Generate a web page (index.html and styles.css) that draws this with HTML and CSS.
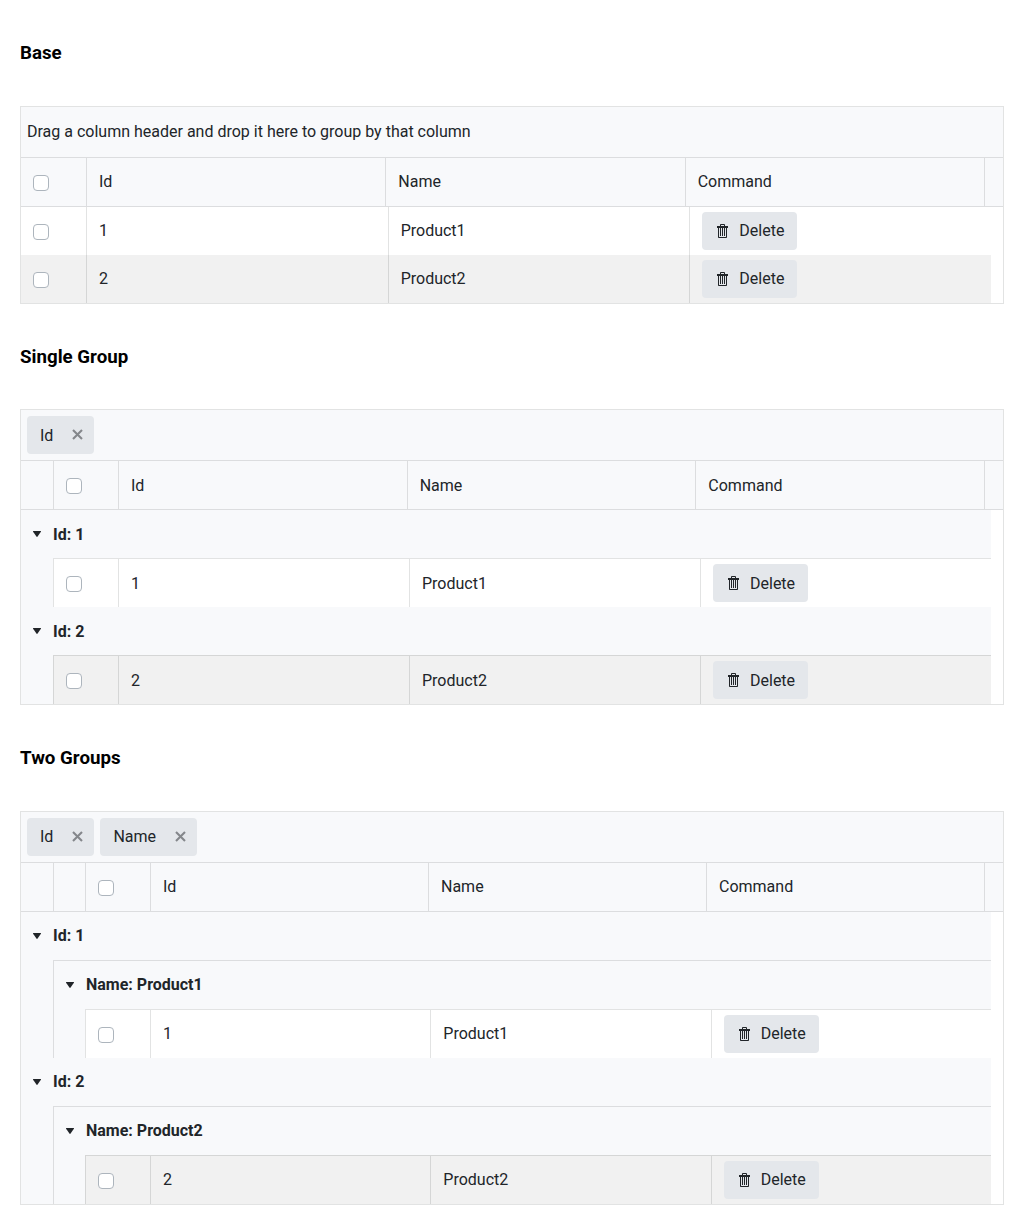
FILE: index.html
```html
<!DOCTYPE html>
<html lang="en">
<head>
<meta charset="utf-8">
<title>Grid grouping</title>
<link rel="stylesheet" href="styles.css">
</head>
<body>
<svg class="sprite" aria-hidden="true">
  <symbol id="trash" viewBox="0 0 11 14"><path fill-rule="evenodd" d="M3 2V.9Q3 0 3.9 0h3.2Q8 0 8 .9V2h3v2H0V2zM4 2h3V1H4zM1 4h1v9h7V4h1v9.2q0 .8-.8.8H1.8q-.8 0-.8-.8z"/><path d="M3 4h1v8H3zM5 4h1v8H5zM7 4h1v8H7z"/></symbol>
  <symbol id="close" viewBox="0 0 11 11"><path d="M1 1l9 9M10 1l-9 9" fill="none" stroke="currentColor" stroke-width="2.1"/></symbol>
  <symbol id="caret" viewBox="0 0 8 6"><path d="M.3 0h7.4q.5.2.2.7L4.6 5.6q-.6.6-1.2 0L.1.7Q-.2.2.3 0z"/></symbol>
</svg>

<h3 class="title">Base</h3>
<section class="grid">
  <div class="panel"><span class="hint">Drag a column header and drop it here to group by that column</span></div>
  <div class="head">
    <div class="cell check"><input type="checkbox" class="box"></div>
    <div class="cell">Id</div><div class="cell">Name</div><div class="cell">Command</div><div class="cell end"></div>
  </div>
  <div class="body">
    <div class="row">
      <div class="cell check"><input type="checkbox" class="box"></div><div class="cell">1</div><div class="cell">Product1</div>
      <div class="cell action"><button class="button"><svg class="trash"><use href="#trash"/></svg>Delete</button></div>
    </div>
    <div class="row alt">
      <div class="cell check"><input type="checkbox" class="box"></div><div class="cell">2</div><div class="cell">Product2</div>
      <div class="cell action"><button class="button"><svg class="trash"><use href="#trash"/></svg>Delete</button></div>
    </div>
  </div>
</section>

<h3 class="title">Single Group</h3>
<section class="grid depth-1">
  <div class="panel"><span class="chip">Id<svg class="close"><use href="#close"/></svg></span></div>
  <div class="head">
    <div class="cell indent"></div><div class="cell check"><input type="checkbox" class="box"></div>
    <div class="cell">Id</div><div class="cell">Name</div><div class="cell">Command</div><div class="cell end"></div>
  </div>
  <div class="body">
    <div class="group"><svg class="caret"><use href="#caret"/></svg>Id: 1</div>
    <div class="nest">
      <div class="row">
        <div class="cell check"><input type="checkbox" class="box"></div><div class="cell">1</div><div class="cell">Product1</div>
        <div class="cell action"><button class="button"><svg class="trash"><use href="#trash"/></svg>Delete</button></div>
      </div>
    </div>
    <div class="group"><svg class="caret"><use href="#caret"/></svg>Id: 2</div>
    <div class="nest">
      <div class="row alt">
        <div class="cell check"><input type="checkbox" class="box"></div><div class="cell">2</div><div class="cell">Product2</div>
        <div class="cell action"><button class="button"><svg class="trash"><use href="#trash"/></svg>Delete</button></div>
      </div>
    </div>
  </div>
</section>

<h3 class="title">Two Groups</h3>
<section class="grid depth-2">
  <div class="panel"><span class="chip">Id<svg class="close"><use href="#close"/></svg></span><span class="chip">Name<svg class="close"><use href="#close"/></svg></span></div>
  <div class="head">
    <div class="cell indent"></div><div class="cell indent"></div><div class="cell check"><input type="checkbox" class="box"></div>
    <div class="cell">Id</div><div class="cell">Name</div><div class="cell">Command</div><div class="cell end"></div>
  </div>
  <div class="body">
    <div class="group"><svg class="caret"><use href="#caret"/></svg>Id: 1</div>
    <div class="nest">
      <div class="group inner"><svg class="caret"><use href="#caret"/></svg>Name: Product1</div>
      <div class="nest plain">
        <div class="row">
          <div class="cell check"><input type="checkbox" class="box"></div><div class="cell">1</div><div class="cell">Product1</div>
          <div class="cell action"><button class="button"><svg class="trash"><use href="#trash"/></svg>Delete</button></div>
        </div>
      </div>
    </div>
    <div class="group"><svg class="caret"><use href="#caret"/></svg>Id: 2</div>
    <div class="nest">
      <div class="group inner"><svg class="caret"><use href="#caret"/></svg>Name: Product2</div>
      <div class="nest plain">
        <div class="row alt">
          <div class="cell check"><input type="checkbox" class="box"></div><div class="cell">2</div><div class="cell">Product2</div>
          <div class="cell action"><button class="button"><svg class="trash"><use href="#trash"/></svg>Delete</button></div>
        </div>
      </div>
    </div>
  </div>
</section>
</body>
</html>
```
FILE: styles.css
```css
:root {
  --line: rgba(33, 37, 41, .13);
  --surface: #f8f9fb;
  --text: #212529;
}
* { box-sizing: border-box; }
body {
  margin: 0;
  padding: 27px 20px 0;
  background: #fff;
  font: 16px/24px Roboto, sans-serif;
}
.sprite { display: none; }
.title {
  height: 52px;
  margin: 0 0 27px;
  padding-top: .08px;
  font-size: 18.72px;
  line-height: 52px;
  font-weight: 700;
  color: #000;
}
.grid {
  border: 1px solid var(--line);
  margin-bottom: 26.45px;
  color: var(--text);
}
.panel {
  display: flex;
  gap: 6px;
  height: 51px;
  padding: 6px;
  border-bottom: 1px solid var(--line);
  background: var(--surface);
}
.hint { padding-top: 7px; }
.chip {
  display: flex;
  align-items: center;
  height: 38px;
  padding: .16px 12px 0 13px;
  border-radius: 4px;
  background: #e4e7eb;
}
.close { width: 11px; height: 11px; margin: 0 -1px 1.2px 19px; color: #84878b; }
.head {
  display: grid;
  grid-template-columns: 65px repeat(3, 1fr) 19px;
  height: 49px;
  border-bottom: 1px solid var(--line);
  background: var(--surface);
}
.depth-1 .head { grid-template-columns: 32px 65px repeat(3, 1fr) 19px; }
.depth-2 .head { grid-template-columns: 32px 32px 65px repeat(3, 1fr) 19px; }
.cell { padding: 12.08px 12px 0; border-left: 1px solid var(--line); }
.cell:first-child { border-left-width: 0; }
.check { display: flex; padding-top: 17px; }
.box {
  appearance: none;
  width: 16px;
  height: 16px;
  margin: 0;
  border: 1px solid #adb5bd;
  border-radius: 4px;
  background: #fff;
}
.body { margin-right: 12px; }
.row {
  display: grid;
  grid-template-columns: 65px repeat(3, 1fr);
  height: 48px;
  background: #fff;
}
.alt { background: #f1f1f1; }
.action { padding: 5px 12px; }
.button {
  display: flex;
  align-items: center;
  width: 95px;
  height: 38px;
  padding: .16px 0 0 15px;
  border: 0;
  border-radius: 4px;
  background: #e4e7eb;
  color: var(--text);
  font: inherit;
}
.trash { width: 11px; height: 14px; margin: 0 11px .2px 0; fill: currentColor; }
.group {
  display: flex;
  align-items: center;
  height: 48px;
  padding: .16px 0 0 12px;
  background: var(--surface);
  font-weight: 700;
}
.caret { width: 8px; height: 6px; margin: 0 12px .2px 0; fill: currentColor; }
.nest { padding-left: 32px; background: var(--surface); }
.nest > .row {
  height: 49px;
  border-top: 1px solid var(--line);
}
.nest > .row > .cell:first-child { border-left-width: 1px; }
.inner { height: 49px; border-top: 1px solid var(--line); border-left: 1px solid var(--line); }
.plain { border-left: 1px solid var(--line); }
.nest > .plain { padding-left: 31px; }
```
